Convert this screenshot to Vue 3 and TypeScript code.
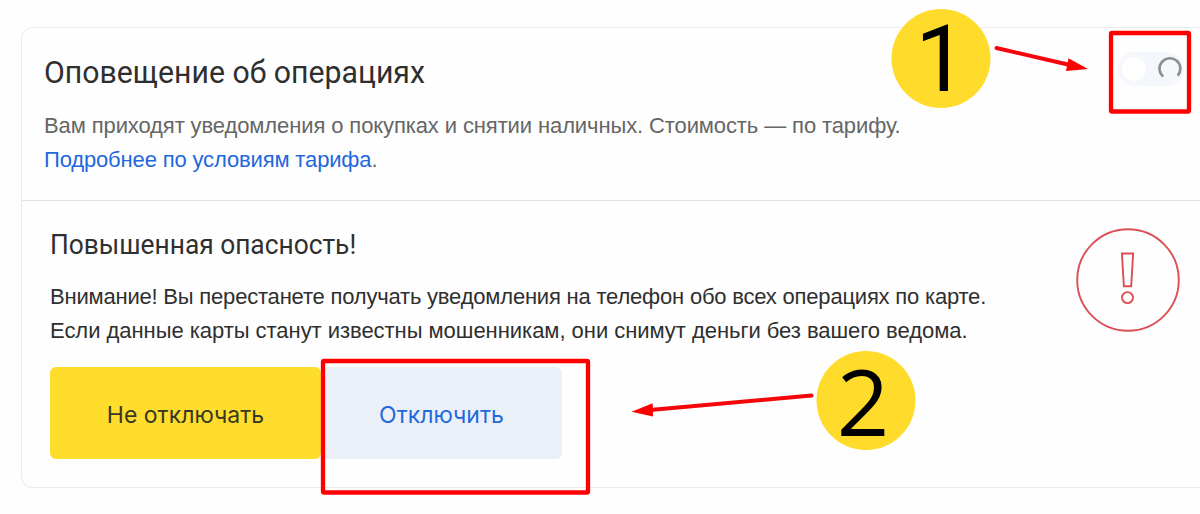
<template>
	<div class="page">
		<section class="card">
			<header class="card-header">
				<div>
					<h1><span>Оповещение об операциях</span></h1>
					<p class="description"><span class="line-description">Вам приходят уведомления о покупках и снятии наличных. Стоимость — по тарифу.</span></p>
					<p class="description"><span class="line-link"><a href="#">Подробнее по условиям тарифа</a>.</span></p>
				</div>
				<button class="toggle" :class="{ 'toggle-on' : enabled }" aria-label="Оповещение об операциях">
					<span class="toggle-knob"></span>
					<svg class="spinner" viewBox="0 0 26 26" v-if="loading">
						<path d="M6.2 20.6 A10.4 10.4 0 1 1 20.6 19.6" />
					</svg>
				</button>
			</header>

			<div class="warning">
				<div>
					<h2><span>Повышенная опасность!</span></h2>
					<p v-for="(line, index) in warningLines" :key="index"><span :class="'line-warning-' + index">{{line}}</span></p>
					<div class="buttons">
						<button class="button button-primary"><span>Не отключать</span></button>
						<button class="button button-secondary"><span>Отключить</span></button>
					</div>
				</div>
				<svg class="warning-icon" viewBox="0 0 106 106">
					<circle cx="53" cy="53" r="50.8" />
					<path d="M46.9 26.5 H58.1 L56.2 59.3 H48.9 Z" />
					<circle cx="52.5" cy="70.6" r="5.5" />
				</svg>
			</div>
		</section>

		<!-- step marks drawn over the card -->
		<svg class="marks" viewBox="0 0 1200 514">
			<rect v-for="frame in frames" :key="frame.x" v-bind="frame" rx="1" />
			<g v-for="arrow in arrows" :key="arrow.head">
				<path class="arrow-line" :d="arrow.line" />
				<path class="arrow-head" :d="arrow.head" />
			</g>
			<g v-for="step in steps" :key="step.label">
				<circle :cx="step.x" :cy="step.y" r="49.5" />
				<text :class="'step-' + step.label" :x="step.textX" :y="step.textY">{{step.label}}</text>
			</g>
		</svg>
	</div>
</template>

<script setup lang="ts">
import { ref } from 'vue';

interface Step {
	label: string,
	x: number,
	y: number,
	textX: number,
	textY: number
}

const enabled = ref(false)
const loading = ref(true)

const warningLines = [
	'Внимание! Вы перестанете получать уведомления на телефон обо всех операциях по карте.',
	'Если данные карты станут известны мошенникам, они снимут деньги без вашего ведома.'
]

const frames = [
	{ x: 1111, y: 33, width: 78, height: 78.5 },
	{ x: 323, y: 361, width: 265, height: 131.5 }
]

const arrows = [
	{ line: 'M996.5 48 L1070 65', head: 'M1088 69 L1068.5 58.3 L1066 71 Z' },
	{ line: 'M811.5 395.6 L650 410', head: 'M631.5 411.8 L652.7 403.3 L653 416.6 Z' }
]

const steps: Step[] = [
	{ label: '1', x: 941, y: 58.5, textX: 941, textY: 91 },
	{ label: '2', x: 866, y: 400.5, textX: 863, textY: 436 }
]
</script>

<style>
body{
	background: #fefefe;
}
</style>

<style scoped>
.page{
	position: relative;
	box-sizing: border-box;
	height: 514px;
	padding: 27px 0 0 21px;
	overflow: hidden;
	font-family: 'Liberation Sans', Arial, sans-serif;
	color: #2f2f2f;
}

.card{
	box-sizing: border-box;
	height: 461px;
	border: 1.5px solid #ebebeb;
	border-right: 0;
	border-radius: 12px 0 0 12px;
	background: #fefefe;
}

.card-header{
	display: flex;
	justify-content: space-between;
	box-sizing: border-box;
	height: 173px;
	padding: 23px 16px 0 22px;
	border-bottom: 1.5px solid #e4e4e4;
}

h1, h2, p{
	margin: 0;
	font-weight: 400;
	white-space: nowrap;
}

h1{
	height: 58px;
	font-family: Roboto, sans-serif;
	font-size: 31px;
	line-height: 44px;
}

h2{
	height: 56px;
	font-family: Roboto, sans-serif;
	font-size: 28px;
	line-height: 41px;
}

h1 span, h2 span{
	display: inline-block;
	transform-origin: 0 50%;
}

h1 span{
	transform: scaleX(.975);
}

h2 span{
	transform: scaleX(.94);
}

p{
	font-size: 22px;
	line-height: 34px;
}

.description{
	color: #666;
}

.description a{
	color: #1f68dd;
	text-decoration: none;
}

.line-description{
	letter-spacing: -.11px;
}

.line-link{
	letter-spacing: -.15px;
}

.line-warning-0{
	letter-spacing: -.2px;
}

.line-warning-1{
	letter-spacing: -.04px;
}

.toggle{
	display: flex;
	align-items: center;
	justify-content: space-between;
	width: 66px;
	height: 34px;
	margin-top: 1px;
	padding: 0 1px 0 4px;
	border: 0;
	border-radius: 17px;
	background: #f4f7fc;
}

.toggle-on{
	flex-direction: row-reverse;
}

.toggle-knob{
	width: 24px;
	height: 24px;
	border-radius: 50%;
	background: #fff;
}

.spinner{
	width: 26px;
	height: 26px;
	fill: none;
	stroke: #8e8e8e;
	stroke-width: 2.6;
}

.warning{
	display: flex;
	justify-content: space-between;
	padding: 23px 19px 0 28px;
}

.warning-icon{
	width: 106px;
	height: 106px;
	margin-top: 3px;
	fill: none;
	stroke: #dc4f54;
	stroke-width: 1.9;
}

.buttons{
	display: flex;
	margin-top: 19px;
}

.button{
	height: 92px;
	padding: 4px 0 0;
	border: 0;
	border-radius: 6px;
	font-family: Inter, sans-serif;
	font-size: 23px;
	cursor: pointer;
}

.button-primary{
	width: 271px;
	background: #ffdd2d;
	color: #383725;
}

.button-secondary{
	width: 241px;
	background: #ebf0f8;
	color: #2169dc;
}

.marks{
	position: absolute;
	inset: 0;
	width: 1200px;
	height: 514px;
	pointer-events: none;
}

.marks rect{
	fill: none;
	stroke: #fe0000;
	stroke-width: 4.3;
}

.arrow-line{
	stroke: #f5060a;
	stroke-width: 4;
	stroke-linecap: round;
}

.arrow-head{
	fill: #f00;
}

.marks circle{
	fill: #ffdc2c;
}

.marks text{
	font-family: 'Open Sans', sans-serif;
	font-size: 92px;
	text-anchor: middle;
	fill: #000;
}

.marks .step-1{
	font-family: Roboto, sans-serif;
}
</style>
